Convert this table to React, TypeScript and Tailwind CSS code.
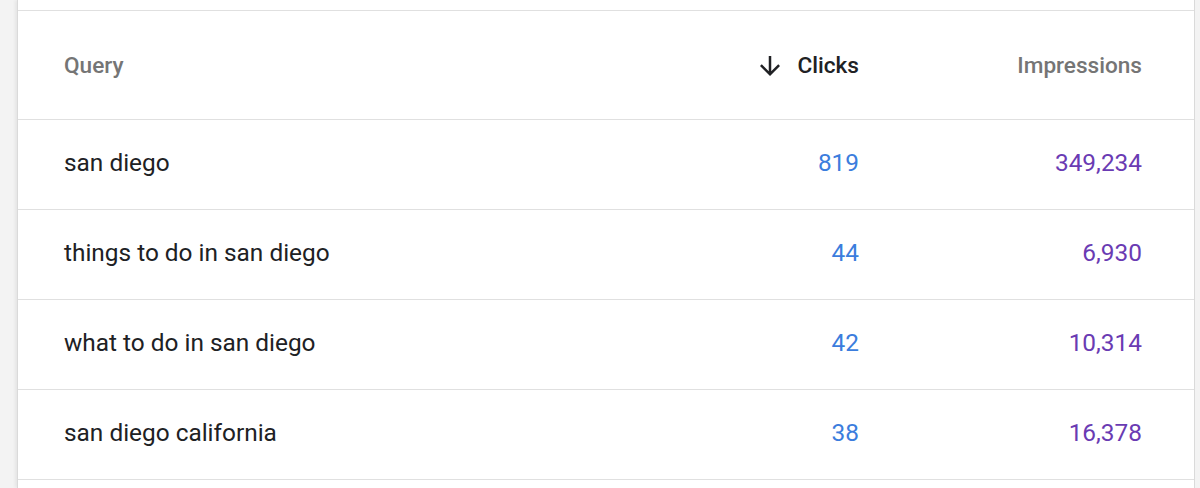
import React from 'react';

type QueryRow = {
  query: string;
  clicks: string;
  impressions: string;
};

const ROWS: QueryRow[] = [
  { query: 'san diego', clicks: '819', impressions: '349,234' },
  { query: 'things to do in san diego', clicks: '44', impressions: '6,930' },
  { query: 'what to do in san diego', clicks: '42', impressions: '10,314' },
  { query: 'san diego california', clicks: '38', impressions: '16,378' },
];

function ArrowDownIcon() {
  return (
    <svg width="30" height="30" viewBox="0 0 24 24" fill="currentColor">
      <path d="M20 12l-1.41-1.41L13 16.17V4h-2v12.17l-5.58-5.59L4 12l8 8 8-8z" />
    </svg>
  );
}

export default function App() {
  return (
    <div className="flex h-[488px] w-full overflow-hidden bg-[#f3f3f3] pl-[17px] pr-[5px] font-['Roboto',sans-serif]">
      <div className="flex-1 border-x border-[#dadada] bg-white pt-[10px] shadow-[-2px_0_3px_rgba(0,0,0,0.06)]">
        <div className="flex h-[110px] items-center border-y border-[#e0e0e0] pt-[2px] pl-[46px] pr-[52px] text-[22.6px] font-medium">
          <div className="flex-1 text-[#757575]">Query</div>
          <div className="flex w-[220px] items-center justify-end gap-[13px] text-[#202124]">
            <ArrowDownIcon />
            <span>Clicks</span>
          </div>
          <div className="w-[283px] text-right text-[#757575]">Impressions</div>
        </div>

        {ROWS.map((row) => (
          <div
            key={row.query}
            className="flex h-[90px] items-center border-b border-[#e0e0e0] pb-[3px] pl-[46px] pr-[52px] text-[24.4px]"
          >
            <div className="flex-1 text-[#202124]">{row.query}</div>
            <div className="w-[220px] text-right text-[#3b7ddd]">{row.clicks}</div>
            <div className="w-[283px] text-right text-[#6a3bb3]">{row.impressions}</div>
          </div>
        ))}
      </div>
    </div>
  );
}
